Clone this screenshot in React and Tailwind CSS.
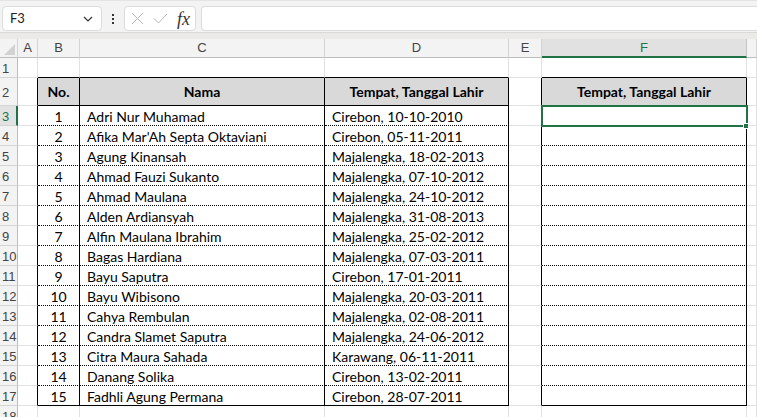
import React from 'react'

const data = [
  ['1', 'Adri Nur Muhamad', 'Cirebon, 10-10-2010'],
  ['2', "Afika Mar'Ah Septa Oktaviani", 'Cirebon, 05-11-2011'],
  ['3', 'Agung Kinansah', 'Majalengka, 18-02-2013'],
  ['4', 'Ahmad Fauzi Sukanto', 'Majalengka, 07-10-2012'],
  ['5', 'Ahmad Maulana', 'Majalengka, 24-10-2012'],
  ['6', 'Alden Ardiansyah', 'Majalengka, 31-08-2013'],
  ['7', 'Alfin Maulana Ibrahim', 'Majalengka, 25-02-2012'],
  ['8', 'Bagas Hardiana', 'Majalengka, 07-03-2011'],
  ['9', 'Bayu Saputra', 'Cirebon, 17-01-2011'],
  ['10', 'Bayu Wibisono', 'Majalengka, 20-03-2011'],
  ['11', 'Cahya Rembulan', 'Majalengka, 02-08-2011'],
  ['12', 'Candra Slamet Saputra', 'Majalengka, 24-06-2012'],
  ['13', 'Citra Maura Sahada', 'Karawang, 06-11-2011'],
  ['14', 'Danang Solika', 'Cirebon, 13-02-2011'],
  ['15', 'Fadhli Agung Permana', 'Cirebon, 28-07-2011'],
]

const letters = ['A', 'B', 'C', 'D', 'E', 'F', '']

// columns: 0=A 1=B 2=C 3=D 4=E 5=F 6=G
const inTable = (col) => col === 1 || col === 2 || col === 3 || col === 5

const Cell = ({ row, col, children, align = 'left', bold = false }) => {
  const tableRow = row >= 2 && row <= 17
  const blackRight = tableRow && (col === 0 || col === 1 || col === 2 || col === 3 || col === 4 || col === 5)

  let bottom = 'border-b-[#e1e1e1]'
  if (row === 1 && inTable(col)) bottom = 'border-b-black'
  if ((row === 2 || row === 17) && inTable(col)) bottom = 'border-b-black'
  if (row >= 3 && row <= 16 && inTable(col)) bottom = 'border-b-black [border-bottom-style:dotted]'

  const right = blackRight ? 'border-r-black' : 'border-r-[#e1e1e1]'
  const bg = row === 2 && inTable(col) ? 'bg-[#d9d9d9]' : 'bg-white'
  const just = align === 'center' ? 'justify-center' : 'justify-start pl-[7px]'
  const weight = bold ? 'font-bold' : 'font-normal pt-[2px]'

  return (
    <div className={`flex items-center overflow-hidden whitespace-nowrap border-r border-b text-[14px] text-black ${right} ${bottom} ${bg} ${just} ${weight}`}>
      {children}
    </div>
  )
}

const RowHead = ({ n, active }) => (
  <div
    className={
      active
        ? 'flex items-center pl-[2px] pt-[2px] overflow-hidden bg-[#e2e2e2] border-b border-b-[#d4d4d4] border-r-2 border-r-[#217346] text-[13px] text-[#217346]'
        : 'flex items-center pl-[2px] pt-[2px] overflow-hidden bg-[#f3f3f3] border-b border-b-[#d4d4d4] border-r border-r-[#bdbdbd] text-[13px] text-[#444]'
    }
    style={{ fontFamily: '"Liberation Sans", sans-serif' }}
  >
    {n}
  </div>
)

const Toolbar = () => (
  <div className="h-[32px] bg-[#f3f3f3] border-t border-t-[#e4e4e4] flex items-start pt-[5px] pl-[2px]">
    <div className="w-[100px] h-[25px] bg-white border border-[#dcdcdc] rounded-[4px] flex items-center justify-between pl-[7px] pr-[8px] text-[13px] text-[#222]">
      <span>F3</span>
      <svg width="10" height="6" viewBox="0 0 10 6">
        <path d="M1 1 L5 5 L9 1" fill="none" stroke="#333" strokeWidth="1.2" />
      </svg>
    </div>
    <div className="w-[22px] h-[25px] flex flex-col items-center justify-center gap-[2px]">
      <span className="w-[2px] h-[2px] bg-[#333]" />
      <span className="w-[2px] h-[2px] bg-[#333]" />
      <span className="w-[2px] h-[2px] bg-[#333]" />
    </div>
    <div className="w-[72px] h-[25px] bg-white border border-[#dcdcdc] rounded-[4px] flex items-center pl-[6px] gap-[9px]">
      <svg width="13" height="13" viewBox="0 0 13 13">
        <path d="M1 1 L12 12 M12 1 L1 12" stroke="#b8b8b8" strokeWidth="1" />
      </svg>
      <svg width="15" height="11" viewBox="0 0 15 11">
        <path d="M1 5.5 L5.5 10 L14 1" fill="none" stroke="#b8b8b8" strokeWidth="1" />
      </svg>
      <span className="italic text-[18px] text-[#333] leading-none" style={{ fontFamily: '"Liberation Serif", serif' }}>
        fx
      </span>
    </div>
    <div className="ml-[5px] flex-1 h-[25px] bg-white border border-[#dcdcdc] rounded-l-[4px] border-r-0" />
  </div>
)

const App = () => {
  const colW = 'grid-cols-[18px_20px_42px_245px_184px_33px_205px_1fr]'
  const rowH = 'grid-rows-[19px_20px_28px_repeat(16,20px)]'

  const cells = []
  // column header row
  cells.push(
    <div key="corner" className="relative bg-[#f3f3f3] border-r border-r-[#d4d4d4] border-b border-b-[#bdbdbd]">
      <svg className="absolute right-[2px] bottom-[2px]" width="11" height="11" viewBox="0 0 11 11">
        <path d="M11 0 L11 11 L0 11 Z" fill="#d2d2d2" />
      </svg>
    </div>
  )
  letters.forEach((l, i) => {
    cells.push(
      <div
        key={'h' + i}
        className={
          i === 5
            ? 'flex items-center justify-center bg-[#e1e1e1] border-r border-r-[#c6c6c6] border-b-2 border-b-[#217346] text-[13px] text-[#217346]'
            : 'flex items-center justify-center bg-[#f3f3f3] border-r border-r-[#d4d4d4] border-b border-b-[#bdbdbd] text-[13px] text-[#444]'
        }
        style={{ fontFamily: '"Liberation Sans", sans-serif' }}
      >
        {l}
      </div>
    )
  })

  for (let r = 1; r <= 18; r++) {
    cells.push(<RowHead key={'r' + r} n={r} active={r === 3} />)
    const d = r >= 3 && r <= 17 ? data[r - 3] : null
    for (let c = 0; c < 7; c++) {
      let content = null
      let align = 'left'
      let bold = false
      if (r === 2) {
        bold = true
        align = 'center'
        if (c === 1) content = 'No.'
        if (c === 2) content = 'Nama'
        if (c === 3 || c === 5) content = 'Tempat, Tanggal Lahir'
      }
      if (d) {
        if (c === 1) { content = d[0]; align = 'center' }
        if (c === 2) content = d[1]
        if (c === 3) content = d[2]
      }
      cells.push(
        <Cell key={r + '-' + c} row={r} col={c} align={align} bold={bold}>
          {content}
        </Cell>
      )
    }
  }

  return (
    <div className="relative w-[757px] h-[417px] overflow-hidden bg-white" style={{ fontFamily: 'Lato, "Noto Sans", sans-serif' }}>
      <Toolbar />
      <div className="h-[7px] bg-[#ece9e9] border-t border-t-[#dadada]" />
      <div className={`grid ${colW} ${rowH}`}>{cells}</div>

      {/* active cell F3 */}
      <div className="absolute left-[541px] top-[105px] w-[207px] h-[22px] border-2 border-[#217346]" />
      <div className="absolute left-[743px] top-[123px] w-[6px] h-[6px] bg-[#217346] border border-white" />
    </div>
  )
}

export default App
